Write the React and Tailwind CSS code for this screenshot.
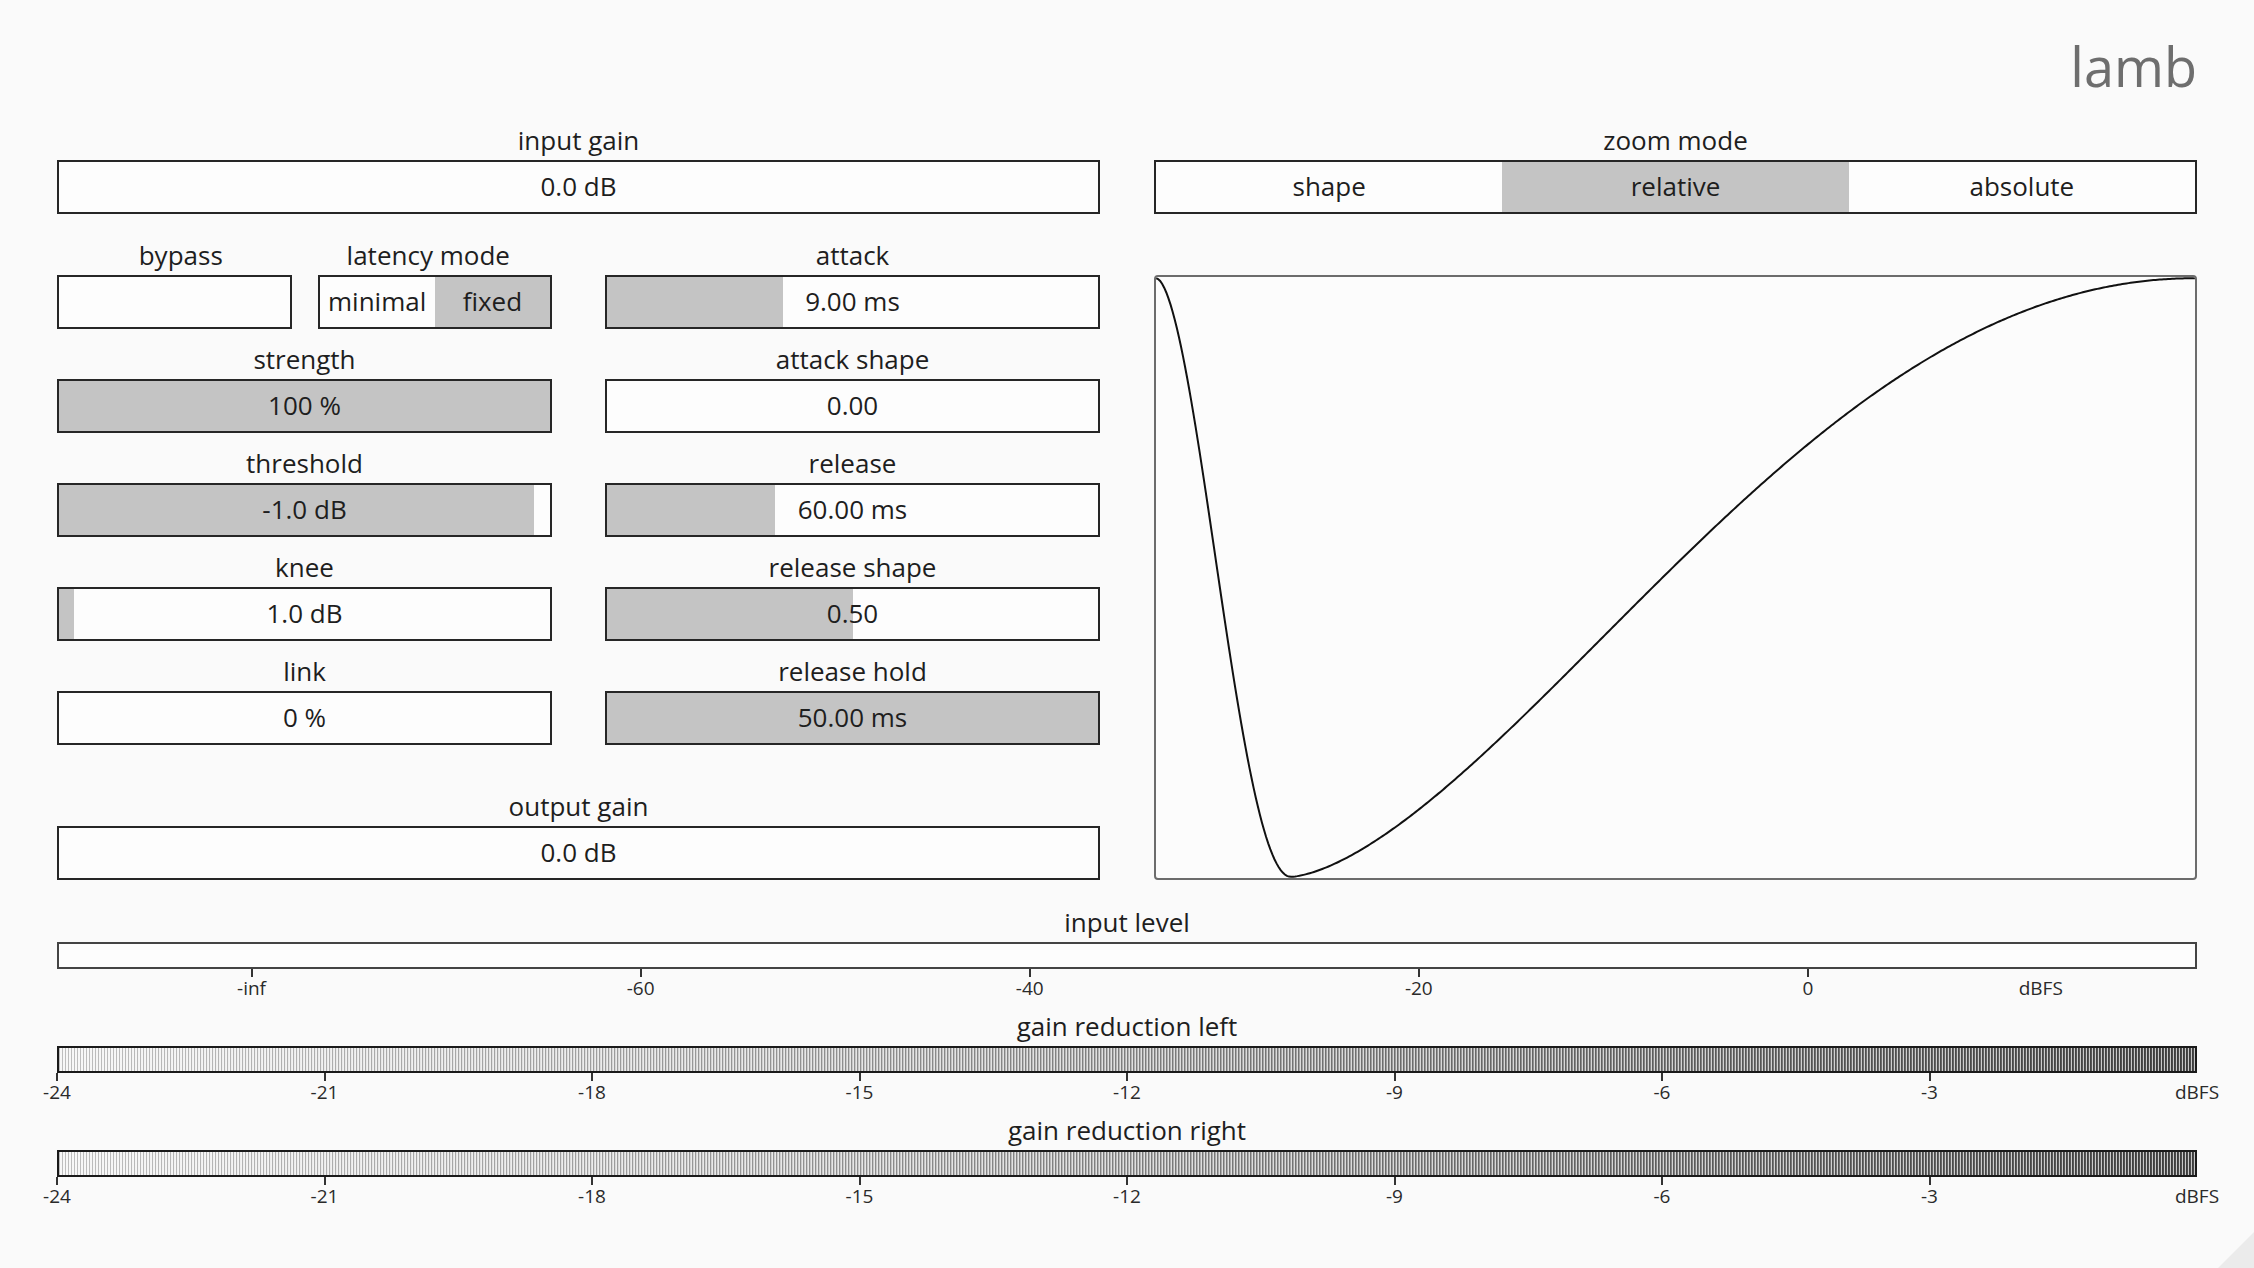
import React from "react";

function Label({ text, h }) {
  return (
    <div
      className="flex items-end justify-center pb-[7px] text-[26px] leading-none text-[#1e1e1e] whitespace-nowrap"
      style={{ height: h }}
    >
      {text}
    </div>
  );
}

function Slider({ label, value, frac = 0, h = 50 }) {
  return (
    <div className="flex flex-col">
      <Label text={label} h={h} />
      <div className="relative h-[54px] pb-[3px] border-2 border-[#262626] bg-[#fdfdfd] flex items-center justify-center overflow-hidden">
        {frac > 0 && (
          <div
            className="absolute inset-y-0 left-0 bg-[#c4c4c4]"
            style={{ width: `${frac * 100}%` }}
          />
        )}
        <span className="relative text-[26px] leading-none text-[#1e1e1e]">{value}</span>
      </div>
    </div>
  );
}

function SegBox({ options, active }) {
  return (
    <div className="h-[54px] border-2 border-[#262626] bg-[#fdfdfd] flex">
      {options.map((o, i) => (
        <div
          key={o}
          className={`flex-1 flex items-center justify-center pb-[3px] text-[26px] leading-none text-[#1e1e1e] ${
            i === active ? "bg-[#c4c4c4]" : ""
          }`}
        >
          {o}
        </div>
      ))}
    </div>
  );
}

function curvePath() {
  const a = 0.1297;
  const pts = [];
  const n = 500;
  for (let i = 0; i <= n; i++) {
    const x = i / n;
    let y;
    if (x < a) {
      const t = Math.pow(x / a, 0.9);
      y = (1 - Math.cos(Math.PI * t)) / 2;
    } else {
      const s = Math.pow((x - a) / (1 - a), 0.78);
      y = 1 - (1 - Math.cos(Math.PI * s)) / 2;
    }
    pts.push(`${(x * 1000).toFixed(2)},${(2 + y * 996).toFixed(2)}`);
  }
  return "M" + pts.join(" L");
}

function Graph() {
  return (
    <div className="relative flex-1 border-2 border-[#6c6c6c] rounded-[4px] bg-[#fcfcfc] overflow-hidden">
      <svg
        className="absolute inset-0 w-full h-full"
        viewBox="0 0 1000 1000"
        preserveAspectRatio="none"
      >
        <path
          d={curvePath()}
          fill="none"
          stroke="#111"
          strokeWidth="2"
          vectorEffect="non-scaling-stroke"
        />
      </svg>
    </div>
  );
}

function Stripes() {
  const n = 712;
  const rects = [];
  for (let i = 0; i < n; i++) {
    const t = i / (n - 1);
    const g = Math.round(190 - t * 130);
    const w = 1 + t * 0.9;
    rects.push(
      <rect key={i} x={i * 3} y="0" width={w} height="30" fill={`rgb(${g},${g},${g})`} />
    );
  }
  return (
    <svg className="w-full h-full block" viewBox="0 0 2136 30" preserveAspectRatio="none">
      <defs>
        <linearGradient id="grbg" x1="0" x2="1" y1="0" y2="0">
          <stop offset="0" stopColor="#f8f8f8" />
          <stop offset="1" stopColor="#c8c8c8" />
        </linearGradient>
      </defs>
      <rect x="0" y="0" width="2136" height="30" fill="url(#grbg)" />
      {rects}
    </svg>
  );
}

function Meter({ label, h, ticks, striped, borderCls }) {
  return (
    <div className="flex flex-col">
      <Label text={label} h={h} />
      <div className={`h-[27px] border-2 ${borderCls} bg-[#fdfdfd] overflow-hidden`}>
        {striped && <Stripes />}
      </div>
      <div className="relative h-[27px]">
        {ticks.map((t) => (
          <React.Fragment key={t.label}>
            {t.tick && (
              <div
                className="absolute top-0 h-[8px] w-[2px] -translate-x-1/2 bg-[#333]"
                style={{ left: `${t.pos * 100}%` }}
              />
            )}
            <div
              className="absolute top-[10px] -translate-x-1/2 text-[19px] leading-none text-[#2a2a2a] whitespace-nowrap"
              style={{ left: `${t.pos * 100}%` }}
            >
              {t.label}
            </div>
          </React.Fragment>
        ))}
      </div>
    </div>
  );
}

const inputTicks = [
  { label: "-inf", pos: 1 / 11, tick: true },
  { label: "-60", pos: 3 / 11, tick: true },
  { label: "-40", pos: 5 / 11, tick: true },
  { label: "-20", pos: 7 / 11, tick: true },
  { label: "0", pos: 9 / 11, tick: true },
  { label: "dBFS", pos: 0.927, tick: false },
];

const grTicks = [
  ...["-24", "-21", "-18", "-15", "-12", "-9", "-6", "-3"].map((l, i) => ({
    label: l,
    pos: i / 8,
    tick: true,
  })),
  { label: "dBFS", pos: 1, tick: false },
];

export default function App() {
  return (
    <div className="relative w-full h-[1268px] bg-[#fafafa] font-['Open_Sans'] px-[57px] overflow-hidden">
      {/* header */}
      <div className="h-[93px] flex items-end justify-end">
        <span className="text-[54px] leading-none text-[#6e6e6e]">lamb</span>
      </div>

      {/* controls + graph */}
      <div className="grid grid-cols-2 gap-x-[54px]">
        <Slider label="input gain" value="0.0 dB" h={67} />
        <div className="flex flex-col">
          <Label text="zoom mode" h={67} />
          <SegBox options={["shape", "relative", "absolute"]} active={1} />
        </div>

        <div className="flex flex-col">
          <div className="grid grid-cols-2 gap-x-[53px]">
            <div className="flex flex-col">
              <div className="grid grid-cols-2">
                <div className="flex flex-col">
                  <Label text="bypass" h={61} />
                  <div className="mr-[13px] h-[54px] border-2 border-[#262626] bg-[#fdfdfd]" />
                </div>
                <div className="flex flex-col">
                  <Label text="latency mode" h={61} />
                  <div className="ml-[13px]">
                    <SegBox options={["minimal", "fixed"]} active={1} />
                  </div>
                </div>
              </div>
              <Slider label="strength" value="100 %" frac={1} />
              <Slider label="threshold" value="-1.0 dB" frac={0.967} />
              <Slider label="knee" value="1.0 dB" frac={0.03} />
              <Slider label="link" value="0 %" />
            </div>
            <div className="flex flex-col">
              <Slider label="attack" value="9.00 ms" frac={0.358} h={61} />
              <Slider label="attack shape" value="0.00" />
              <Slider label="release" value="60.00 ms" frac={0.342} />
              <Slider label="release shape" value="0.50" frac={0.5} />
              <Slider label="release hold" value="50.00 ms" frac={1} />
            </div>
          </div>
          <Slider label="output gain" value="0.0 dB" h={81} />
        </div>

        <div className="flex flex-col pt-[61px]">
          <Graph />
        </div>
      </div>

      {/* meters */}
      <Meter label="input level" h={62} ticks={inputTicks} borderCls="border-[#444]" />
      <Meter label="gain reduction left" h={50} ticks={grTicks} striped borderCls="border-[#1a1a1a]" />
      <Meter label="gain reduction right" h={50} ticks={grTicks} striped borderCls="border-[#1a1a1a]" />

      {/* resize grip */}
      <div className="absolute bottom-0 right-0 w-0 h-0 border-l-[36px] border-l-transparent border-b-[36px] border-b-[#ebebeb]" />
    </div>
  );
}
